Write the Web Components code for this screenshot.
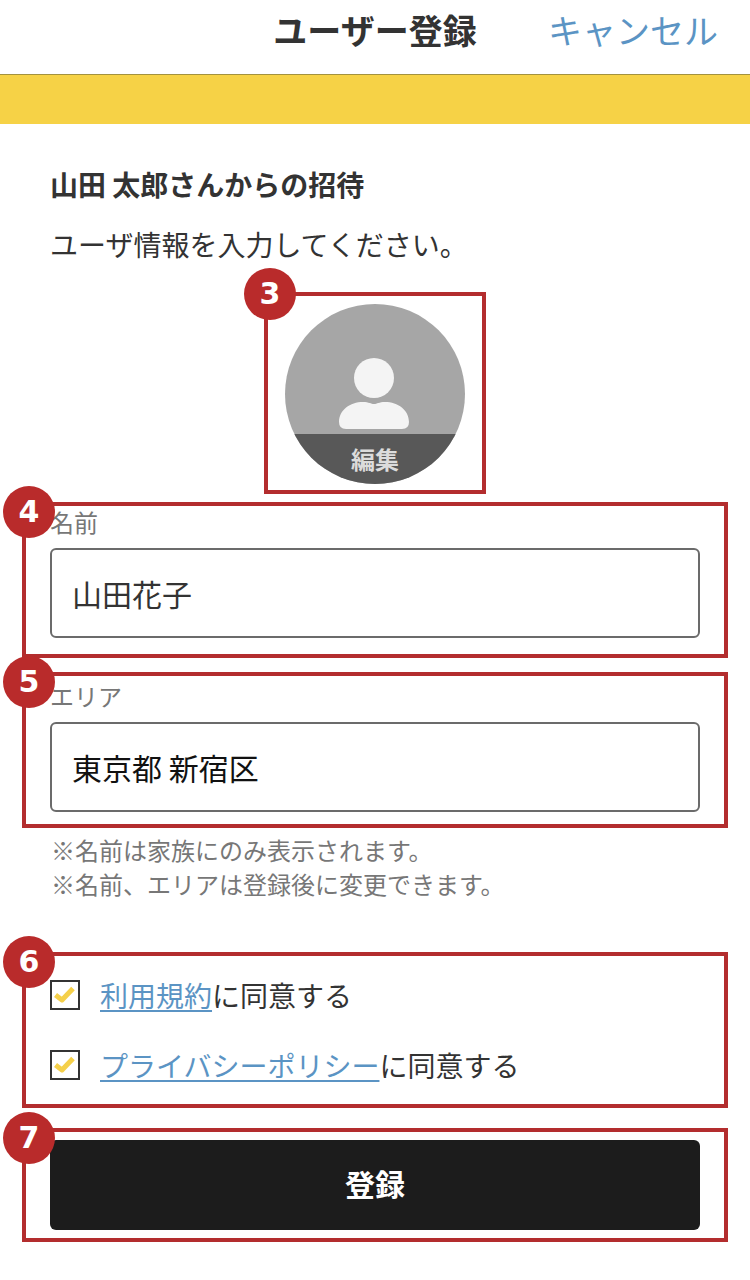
<!DOCTYPE html>
<html lang="ja">
<head>
<meta charset="utf-8">
<title>ユーザー登録</title>
<style>
  html, body { margin: 0; padding: 0; background: #fff; }
  body {
    width: 750px;
    font-family: "Noto Sans CJK JP", "Noto Sans", sans-serif;
    color: #333;
  }
</style>
</head>
<body>
<reg-page></reg-page>

<script>
class RegHeader extends HTMLElement {
  constructor() {
    super();
    this.attachShadow({ mode: 'open' });
    this.shadowRoot.innerHTML = `
      <style>
        :host {
          display: grid;
          grid-template-columns: 1fr auto 1fr;
          align-items: start;
          height: 74px;
          border-bottom: 1px solid #a3923f;
          background: #fff;
        }
        .title { grid-column: 2; font-size: 34px; line-height: 60px; font-weight: 700; color: #333; }
        .cancel { grid-column: 3; justify-self: end; padding-right: 32px; font-size: 34px; line-height: 60px; color: #5b94c4; }
      </style>
      <div class="title"><slot></slot></div>
      <div class="cancel"><slot name="action"></slot></div>
    `;
  }
}

class NoteBox extends HTMLElement {
  constructor() {
    super();
    this.attachShadow({ mode: 'open' });
    this.shadowRoot.innerHTML = `
      <style>
        :host {
          display: block;
          position: relative;
          box-sizing: border-box;
          border: 4px solid #b32d2e;
        }
        .badge {
          position: absolute;
          left: var(--badge-left, -23px);
          top: var(--badge-top, -20px);
          width: 52px;
          height: 52px;
          border-radius: 50%;
          background: #b92b2b;
          color: #fff;
          font: 700 30px/52px "DejaVu Sans", sans-serif;
          text-align: center;
          z-index: 2;
        }
      </style>
      <div class="badge">${this.getAttribute('n')}</div>
      <slot></slot>
    `;
  }
}

class AvatarEdit extends HTMLElement {
  constructor() {
    super();
    this.attachShadow({ mode: 'open' });
    this.shadowRoot.innerHTML = `
      <style>
        :host {
          display: block;
          position: relative;
          width: 180px;
          height: 180px;
          border-radius: 50%;
          overflow: hidden;
          background: #a6a6a6;
        }
        svg { display: block; }
        .edit {
          position: absolute;
          left: 0;
          right: 0;
          bottom: 0;
          height: 50px;
          background: #585858;
          color: #dcdcdc;
          font-size: 24px;
          font-weight: 700;
          line-height: 50px;
          text-align: center;
        }
      </style>
      <svg width="180" height="180" viewBox="0 0 180 180">
        <circle cx="89" cy="74" r="20" fill="#f4f4f4"/>
        <path fill="#f4f4f4" d="M54 118C54 106 65 98 78 98C84 98 86 100 89 100C92 100 94 98 100 98C113 98 124 106 124 118Q124 125 117 125H61Q54 125 54 118Z"/>
      </svg>
      <div class="edit"><slot></slot></div>
    `;
  }
}

class TextField extends HTMLElement {
  constructor() {
    super();
    this.attachShadow({ mode: 'open' });
    this.shadowRoot.innerHTML = `
      <style>
        :host { display: block; }
        .label { font-size: 24px; line-height: 32px; color: #777; }
        .input {
          box-sizing: border-box;
          height: 90px;
          margin-top: var(--field-gap, 10px);
          padding: 0 20px;
          border: 2px solid #6b6b6b;
          border-radius: 6px;
          background: #fff;
          font-size: 30px;
          line-height: 86px;
          color: var(--value-color, #333);
        }
      </style>
      <div class="label">${this.getAttribute('label')}</div>
      <div class="input"><slot></slot></div>
    `;
  }
}

class AgreeCheck extends HTMLElement {
  constructor() {
    super();
    this.attachShadow({ mode: 'open' });
    this.shadowRoot.innerHTML = `
      <style>
        :host {
          display: flex;
          align-items: center;
          gap: 20px;
          height: 40px;
          font-size: 28px;
          line-height: 40px;
          color: #333;
        }
        .box {
          box-sizing: border-box;
          flex: none;
          width: 30px;
          height: 30px;
          border: 2px solid #333;
          background: #fff;
        }
        svg { display: block; }
        a { color: #5b94c4; text-decoration: underline; text-underline-offset: 3px; text-decoration-thickness: 2px; }
      </style>
      <div class="box">
        <svg width="26" height="26" viewBox="0 0 26 26">
          <path d="M3.5 13L10 18L21 6.5" fill="none" stroke="#f5d04a" stroke-width="5" stroke-linejoin="round"/>
        </svg>
      </div>
      <div><a href="#">${this.getAttribute('link')}</a><slot></slot></div>
    `;
  }
}

class RegPage extends HTMLElement {
  constructor() {
    super();
    this.attachShadow({ mode: 'open' });
    this.shadowRoot.innerHTML = `
      <style>
        :host { display: block; height: 1280px; overflow: hidden; background: #fff; }
        .band { height: 49px; background: #f6d246; }
        .main { padding: 0 22px; }
        .intro { padding: 40px 0 0 28px; font-size: 28px; line-height: 40px; color: #333; }
        .inviter { font-weight: 700; }
        .lead { margin-top: 20px; }
        .avatar-box {
          width: 222px;
          margin: 28px auto 0;
          padding: 8px 17px 6px;
        }
        .field-a { margin-top: 8px; padding: 0 24px 16px; }
        .field-b { margin-top: 14px; padding: 4px 24px 12px; --field-gap: 10px; --value-color: #111; }
        .notes { margin: 5px 0 0 29px; font-size: 24px; line-height: 34px; color: #777; }
        .checks {
          margin-top: 51px;
          padding: 19px 24px 19px;
          display: flex;
          flex-direction: column;
          gap: 30px;
        }
        .submit-box { margin-top: 20px; padding: 8px 24px; }
        .submit {
          height: 90px;
          border-radius: 6px;
          background: #1c1c1c;
          color: #fff;
          font-size: 30px;
          font-weight: 700;
          line-height: 86px;
          text-align: center;
        }
      </style>
      <reg-header>ユーザー登録<span slot="action">キャンセル</span></reg-header>
      <div class="band"></div>
      <div class="main">
        <div class="intro">
          <div class="inviter">山田 太郎さんからの招待</div>
          <div class="lead">ユーザ情報を入力してください。</div>
        </div>
        <note-box n="3" class="avatar-box" style="--badge-left:-24px;--badge-top:-28px">
          <avatar-edit>編集</avatar-edit>
        </note-box>
        <note-box n="4" class="field-a">
          <text-field label="名前">山田花子</text-field>
        </note-box>
        <note-box n="5" class="field-b">
          <text-field label="エリア">東京都 新宿区</text-field>
        </note-box>
        <div class="notes">
          <div>※名前は家族にのみ表示されます。</div>
          <div>※名前、エリアは登録後に変更できます。</div>
        </div>
        <note-box n="6" class="checks">
          <agree-check link="利用規約">に同意する</agree-check>
          <agree-check link="プライバシーポリシー">に同意する</agree-check>
        </note-box>
        <note-box n="7" class="submit-box">
          <div class="submit">登録</div>
        </note-box>
      </div>
    `;
  }
}

customElements.define('reg-header', RegHeader);
customElements.define('note-box', NoteBox);
customElements.define('avatar-edit', AvatarEdit);
customElements.define('text-field', TextField);
customElements.define('agree-check', AgreeCheck);
customElements.define('reg-page', RegPage);
</script>
</body>
</html>
